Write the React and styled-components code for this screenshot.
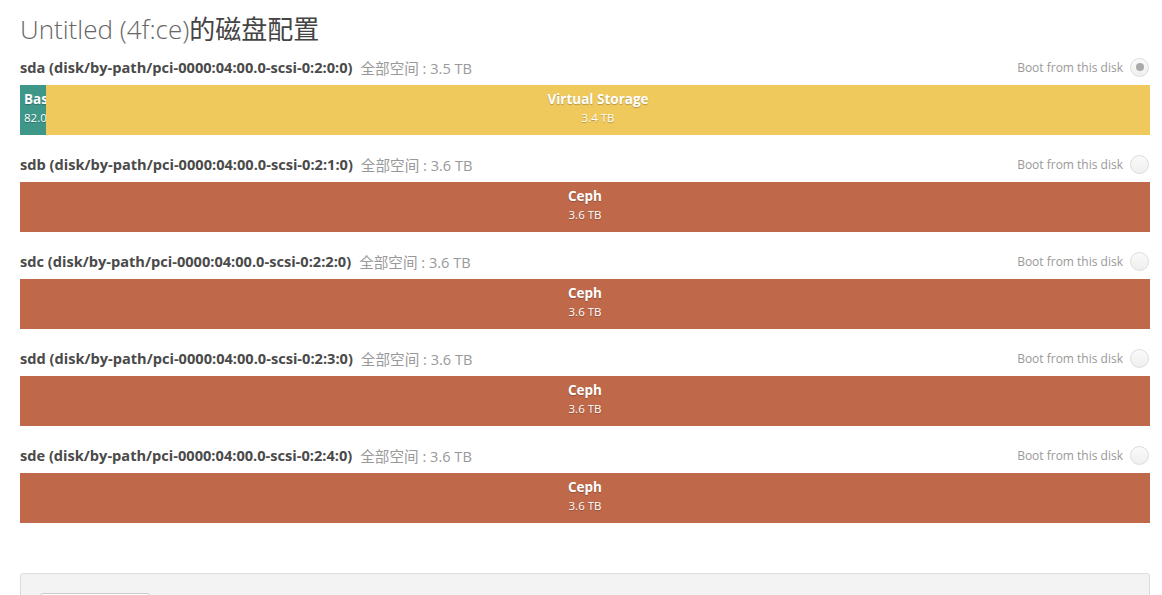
import React from 'react'
import styled, { createGlobalStyle } from 'styled-components'

const GlobalStyle = createGlobalStyle`
  body {
    margin: 0;
    background: #fff;
    font-family: 'Open Sans', 'Noto Sans', 'Noto Sans CJK SC', sans-serif;
    color: #555;
  }
`

const Page = styled.div`
  padding: 0 12px 0 20px;
  height: 595px;
  overflow: hidden;
`

const Title = styled.h1`
  margin: 10px 0 10px;
  font-size: 26px;
  line-height: 36px;
  font-weight: 300;
  color: #666;

  b {
    font-weight: 400;
    color: #444;
    font-family: 'Noto Sans CJK SC', sans-serif;
  }
`

const DiskBlock = styled.section`
  margin-bottom: 19px;
`

const DiskHeader = styled.div`
  display: flex;
  align-items: center;
  height: 20px;
  margin-bottom: 8px;
`

const DiskName = styled.span`
  font-size: 14.6px;
  font-weight: 700;
  color: #4a4a4a;
`

const DiskSize = styled.span`
  margin-left: 8px;
  font-size: 14.6px;
  color: #999;
`

const BootLabel = styled.label`
  margin-left: auto;
  display: flex;
  align-items: center;
  gap: 7px;
  font-size: 12px;
  color: #999;
`

const Radio = styled.span`
  width: 19px;
  height: 19px;
  border-radius: 50%;
  box-sizing: border-box;
  border: 1px solid #ddd;
  background: linear-gradient(#fafafa, #efefef);
  display: flex;
  align-items: center;
  justify-content: center;
  margin-right: 1px;

  &::after {
    content: '';
    width: 8px;
    height: 8px;
    border-radius: 50%;
    background: ${props => (props.checked ? '#aaa' : 'transparent')};
  }
`

const Bar = styled.div`
  display: flex;
  height: 50px;
`

const Segment = styled.div`
  box-sizing: border-box;
  flex: ${props => (props.width ? `0 0 ${props.width}px` : '1 1 0')};
  min-width: 0;
  overflow: hidden;
  background: ${props => props.color};
  color: #fff;
  text-shadow: 0 1px 1px rgba(0, 0, 0, 0.25);
  display: flex;
  flex-direction: column;
  align-items: ${props => (props.width ? 'flex-start' : 'center')};
  padding: ${props => (props.width ? '0 0 0 4px' : '0')};
  white-space: nowrap;
`

const SegName = styled.div`
  margin-top: 5px;
  font-size: 13.5px;
  font-weight: 700;
  line-height: 18px;
`

const SegSize = styled.div`
  font-size: 11.5px;
  line-height: 20px;
`

const Panel = styled.div`
  margin-top: 50px;
  background: #f3f3f3;
  border: 1px solid #ddd;
  border-radius: 3px;
  padding: 19px;
  height: 60px;
`

const Button = styled.button`
  width: 110px;
  height: 30px;
  background: #fff;
  border: 1px solid #ccc;
  border-radius: 3px;
`

const disks = [
  {
    name: 'sda (disk/by-path/pci-0000:04:00.0-scsi-0:2:0:0)',
    size: '3.5 TB',
    boot: true,
    segments: [
      { name: 'Base System', size: '82.0 GB', color: '#3f978a', width: 26 },
      { name: 'Virtual Storage', size: '3.4 TB', color: '#f0c95c' }
    ]
  },
  ...['1', '2', '3', '4'].map((n, i) => ({
    name: `sd${'bcde'[i]} (disk/by-path/pci-0000:04:00.0-scsi-0:2:${n}:0)`,
    size: '3.6 TB',
    boot: false,
    segments: [{ name: 'Ceph', size: '3.6 TB', color: '#c0694a' }]
  }))
]

export default function App () {
  return (
    <Page>
      <GlobalStyle />
      <Title>
        Untitled (4f:ce)<b>的磁盘配置</b>
      </Title>
      {disks.map(disk => (
        <DiskBlock key={disk.name}>
          <DiskHeader>
            <DiskName>{disk.name}</DiskName>
            <DiskSize>全部空间 : {disk.size}</DiskSize>
            <BootLabel>
              Boot from this disk
              <Radio checked={disk.boot} />
            </BootLabel>
          </DiskHeader>
          <Bar>
            {disk.segments.map(seg => (
              <Segment key={seg.name} color={seg.color} width={seg.width}>
                <SegName>{seg.name}</SegName>
                <SegSize>{seg.size}</SegSize>
              </Segment>
            ))}
          </Bar>
        </DiskBlock>
      ))}
      <Panel>
        <Button />
      </Panel>
    </Page>
  )
}
